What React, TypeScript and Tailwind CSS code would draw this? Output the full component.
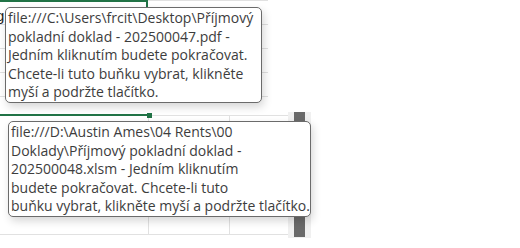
import React from "react";

const tip1 = [
  "file:///C:\\Users\\frcit\\Desktop\\Příjmový",
  "pokladní doklad - 202500047.pdf -",
  "Jedním kliknutím budete pokračovat.",
  "Chcete-li tuto buňku vybrat, klikněte",
  "myší a podržte tlačítko.",
];

const tip2 = [
  "file:///D:\\Austin Ames\\04 Rents\\00",
  "Doklady\\Příjmový pokladní doklad -",
  "202500048.xlsm - Jedním kliknutím",
  "budete pokračovat. Chcete-li tuto",
  "buňku vybrat, klikněte myší a podržte tlačítko.",
];

function Tooltip({ lines, className }: { lines: string[]; className: string }) {
  return (
    <div
      className={
        "absolute bg-white border border-[#6b6b6b] rounded-[5px] shadow-[2px_4px_8px_rgba(0,0,0,0.16)] pl-[2px] pt-[1px] text-[#3d3d3d] text-[14px] leading-[18.5px] " +
        className
      }
      style={{ fontFamily: '"Open Sans", "Noto Sans", sans-serif' }}
    >
      {lines.map((l) => (
        <div key={l} className="whitespace-nowrap">
          {l}
        </div>
      ))}
    </div>
  );
}

export default function App() {
  return (
    <div className="relative w-[520px] h-[248px] bg-white overflow-hidden">
      {/* first sheet crop */}
      <div className="w-[268px] h-[104px] flex flex-col">
        <div className="flex h-[25px] border-b border-[#e1e1e1]">
          <div className="w-[148px] border-t-2 border-r-2 border-[#217346] overflow-hidden">
            <span
              className="block ml-[-4px] mt-[6px] text-[15px] leading-[16px] text-[#222]"
              style={{ fontFamily: '"Liberation Sans", sans-serif' }}
            >
              g
            </span>
          </div>
          <div className="flex-1 border-t border-[#e1e1e1]" />
        </div>
        <div className="h-[24px] border-b border-[#e1e1e1]" />
        <div className="h-[24px] border-b border-[#e1e1e1]" />
        <div className="h-[24px] border-b border-[#e1e1e1]" />
      </div>

      {/* second sheet crop */}
      <div className="mt-[8px] flex w-[311px] h-[126px]">
        <div className="w-[288px] flex flex-col">
          <div className="h-[2px]" />
          <div className="flex h-[2px]">
            <div className="w-[148px] bg-[#217346]" />
            <div className="flex-1 flex flex-col">
              <div className="h-[1px]" />
              <div className="h-[1px] bg-[#e1e1e1]" />
            </div>
          </div>
          <div className="flex h-[119px] border-b border-[#e1e1e1]">
            <div className="w-[149px] border-r border-[#e1e1e1]" />
            <div className="w-[81px] border-r border-[#e1e1e1]" />
          </div>
        </div>
        <div className="w-[23px] h-[126px] bg-[#f0f0f0]">
          <div className="ml-[6px] w-[11px] h-[125px] bg-[#6a6a6a]" />
        </div>
      </div>

      {/* fill handle */}
      <div className="absolute left-[147px] top-[113px] w-[5px] h-[5px] bg-[#217346]" />

      <Tooltip lines={tip1} className="left-[5px] top-[7px] w-[257px] h-[96px]" />
      <Tooltip lines={tip2} className="left-[8px] top-[121px] w-[303px] h-[96px]" />
    </div>
  );
}
